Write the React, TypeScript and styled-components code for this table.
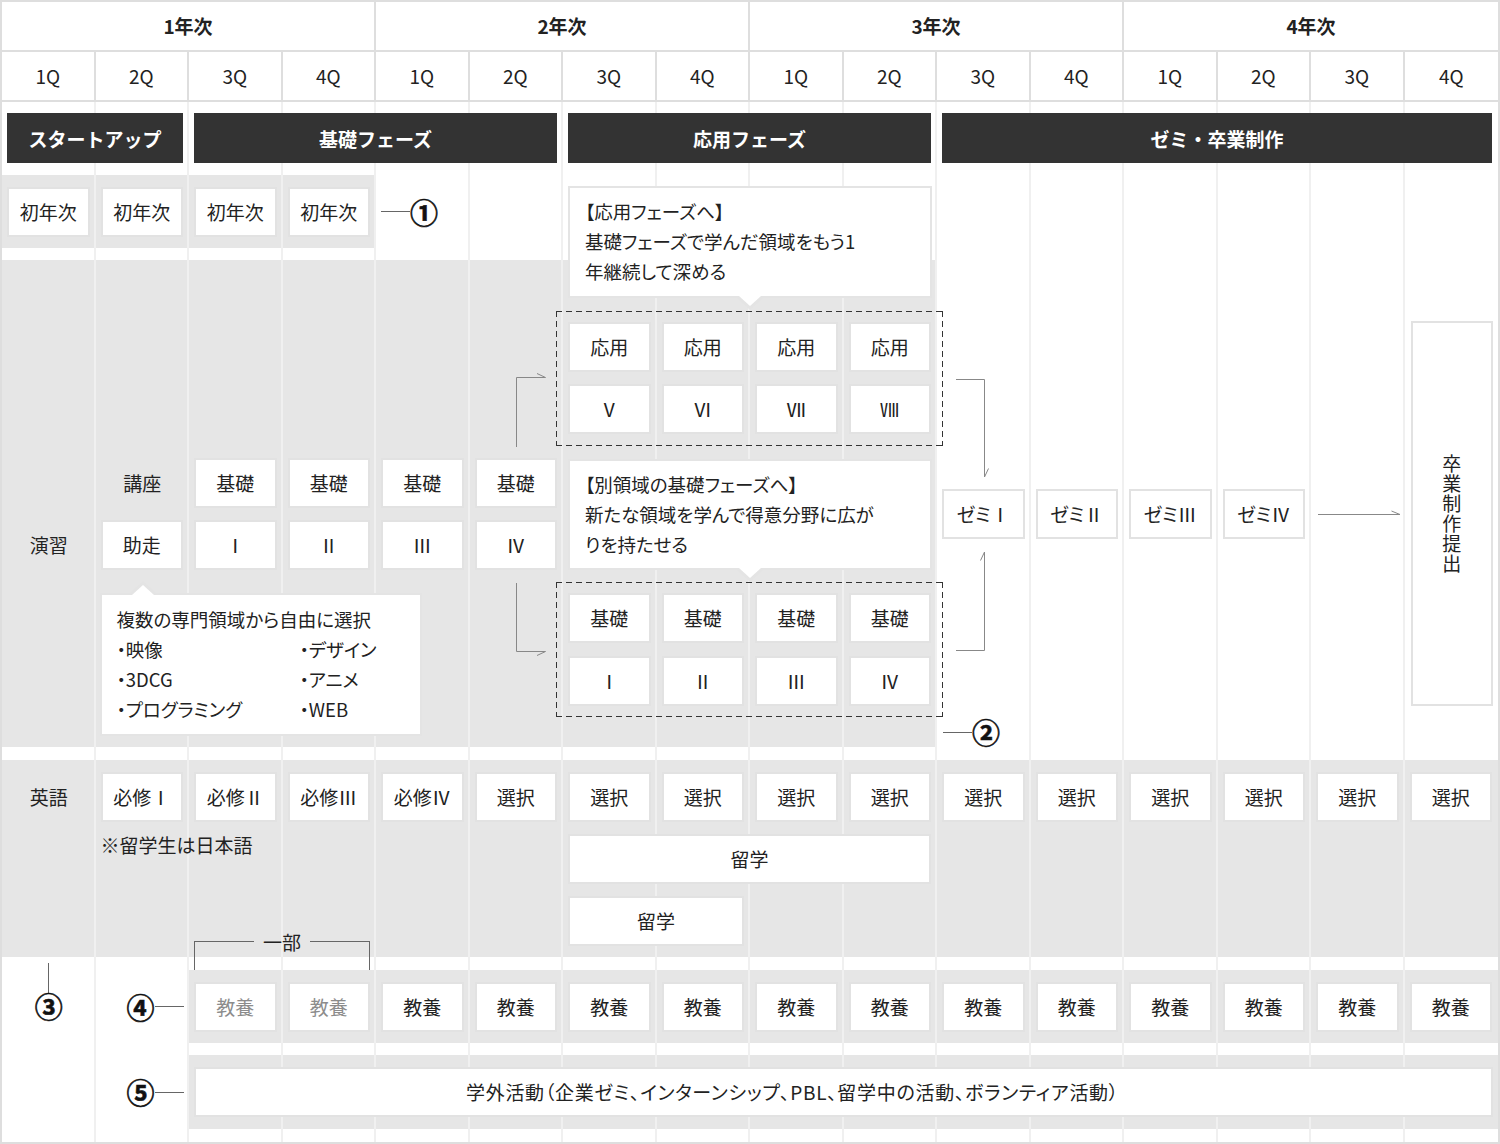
import React from 'react';
import styled, { createGlobalStyle, css } from 'styled-components';

const Global = createGlobalStyle`
  html, body { margin: 0; padding: 0; background: #fff; }
  body { font-family: "Noto Sans CJK JP", "Noto Sans", sans-serif; color: #222; }
  * { box-sizing: border-box; }
`;

type P = { $c: number; $cs?: number; $r: number; $rs?: number };
const place = css<P>`
  grid-column: ${(p) => p.$c} / span ${(p) => p.$cs ?? 1};
  grid-row: ${(p) => p.$r} / span ${(p) => p.$rs ?? 1};
`;

const Frame = styled.div`
  width: 1500px;
  height: 1144px;
  border: 2px solid #dedede;
  display: flex;
  flex-direction: column;
`;

const Header = styled.div`
  display: grid;
  grid-template-columns: repeat(16, 1fr);
  grid-template-rows: 50px 50px;
`;

const YearCell = styled.div<{ $last?: boolean }>`
  grid-column: span 4;
  display: flex;
  align-items: center;
  justify-content: center;
  padding-bottom: 2px;
  font-size: 19px;
  font-weight: 700;
  border-bottom: 2px solid #dedede;
  border-right: ${(p) => (p.$last ? 'none' : '2px solid #dedede')};
`;

const QCell = styled.div<{ $last?: boolean }>`
  display: flex;
  align-items: center;
  justify-content: center;
  padding-bottom: 2px;
  font-size: 19px;
  border-bottom: 2px solid #dedede;
  border-right: ${(p) => (p.$last ? 'none' : '2px solid #dedede')};
`;

const Body = styled.div`
  flex: 1;
  display: grid;
  grid-template-columns: repeat(16, 1fr);
  grid-template-rows: 73px 11px 62px 12px 51px 135px 136px 135px 30px 13px 197px 13px 73px 12px 74px 1fr;
`;

const Band = styled.div<P>`
  ${place};
  background: #e6e6e6;
`;

const ColLine = styled.div<{ $n: number }>`
  grid-column: ${(p) => p.$n};
  grid-row: 1 / -1;
  border-right: 2px solid #f0f0f0;
`;

const PhaseBar = styled.div<P>`
  ${place};
  align-self: start;
  margin: 11px 6px 0 5px;
  height: 50px;
  background: #333;
  color: #fff;
  font-size: 19px;
  font-weight: 700;
  display: flex;
  align-items: center;
  justify-content: center;
`;

const Box = styled.div<P & { $mt: number; $muted?: boolean }>`
  ${place};
  align-self: start;
  margin: ${(p) => p.$mt}px 6px 0 5px;
  height: 50px;
  background: #fff;
  border: 2px solid #e2e2e2;
  display: flex;
  align-items: center;
  justify-content: center;
  padding-bottom: 1px;
  font-size: 19px;
  white-space: nowrap;
  color: ${(p) => (p.$muted ? '#8c8c8c' : '#222')};
  font-feature-settings: "palt";
`;

const WideBox = styled.div<P>`
  ${place};
  align-self: start;
  margin: 12px 5px 0 5px;
  height: 50px;
  background: #fff;
  border: 2px solid #e2e2e2;
  display: flex;
  align-items: center;
  padding: 0 0 1px 270px;
  font-size: 19px;
  letter-spacing: 0.7px;
  white-space: nowrap;
  font-feature-settings: "palt";
`;

const TallBox = styled.div<P>`
  ${place};
  align-self: start;
  margin: 10px 5px 0 6px;
  height: 385px;
  background: #fff;
  border: 2px solid #e2e2e2;
  display: flex;
  align-items: center;
  justify-content: center;
`;

const VText = styled.span`
  writing-mode: vertical-rl;
  font-size: 19px;
  letter-spacing: 1px;
`;

const Label = styled.div<P & { $mt: number; $left?: boolean }>`
  ${place};
  align-self: start;
  margin: ${(p) => p.$mt}px 0 0 ${(p) => (p.$left ? 5 : 0)}px;
  height: 50px;
  display: flex;
  align-items: center;
  justify-content: ${(p) => (p.$left ? 'flex-start' : 'center')};
  padding-bottom: 1px;
  font-size: 19px;
  white-space: nowrap;
`;

const Dashed = styled.div<P>`
  ${place};
  margin: 0 -6px 0 -7px;
  background:
    repeating-linear-gradient(90deg, #333 0 6px, transparent 6px 10px) top left / 100% 1px no-repeat,
    repeating-linear-gradient(90deg, #333 0 6px, transparent 6px 10px) bottom left / 100% 1px no-repeat,
    repeating-linear-gradient(180deg, #333 0 6px, transparent 6px 10px) top left / 1px 100% no-repeat,
    repeating-linear-gradient(180deg, #333 0 6px, transparent 6px 10px) top right / 1px 100% no-repeat;
`;

const Callout = styled.div<P & { $mt: number; $h: number; $w?: number; $ml?: number; $up?: number }>`
  ${place};
  position: relative;
  align-self: start;
  justify-self: ${(p) => (p.$w ? 'start' : 'stretch')};
  width: ${(p) => (p.$w ? `${p.$w}px` : 'auto')};
  margin: ${(p) => p.$mt}px 5px 0 ${(p) => p.$ml ?? 5}px;
  height: ${(p) => p.$h}px;
  background: #fff;
  border: 2px solid #e4e4e4;
  padding: ${(p) => (p.$up ? 9 : 8)}px 15px;
  font-size: 18.5px;
  line-height: 30px;
  font-feature-settings: "palt";
  white-space: nowrap;
  &::before, &::after {
    content: '';
    position: absolute;
    width: 0;
    height: 0;
    transform: translateX(-50%);
    left: ${(p) => (p.$up ? `${p.$up}px` : '50%')};
  }
  &::before {
    border-left: 14px solid transparent;
    border-right: 14px solid transparent;
    ${(p) =>
      p.$up
        ? css`top: -14px; border-bottom: 13px solid #e4e4e4;`
        : css`bottom: -14px; border-top: 13px solid #e4e4e4;`}
  }
  &::after {
    border-left: 11px solid transparent;
    border-right: 11px solid transparent;
    ${(p) =>
      p.$up
        ? css`top: -10px; border-bottom: 10px solid #fff;`
        : css`bottom: -10px; border-top: 10px solid #fff;`}
  }
`;

const FieldList = styled.div`
  display: grid;
  grid-template-columns: 183px 1fr;
`;

const Connector = styled.div<P & { $ml: number }>`
  ${place};
  display: flex;
  align-items: center;
  padding-left: ${(p) => p.$ml}px;
`;

const Stick = styled.span`
  width: 29px;
  height: 1px;
  background: #666;
`;

const Num = styled.span`
  font-size: 28px;
  font-weight: 700;
  line-height: 26px;
  color: #111;
  -webkit-text-stroke: 0.6px #111;
`;

const StackConnector = styled.div<P>`
  ${place};
  display: flex;
  flex-direction: column;
  align-items: center;
  padding-top: 6px;
`;

const VStick = styled.span`
  width: 1px;
  height: 30px;
  background: #666;
`;

const Bracket = styled.div<P>`
  ${place};
  align-self: end;
  height: 29px;
  margin: 0 6px 0 5px;
  border-left: 1px solid #666;
  border-right: 1px solid #666;
`;

const BracketTop = styled.div`
  display: flex;
  align-items: center;
  height: 1px;
`;

const BracketLine = styled.span`
  flex: 1;
  height: 1px;
  background: #666;
`;

const BracketText = styled.span`
  padding: 0 9px;
  font-size: 19px;
  line-height: 20px;
`;

const ArrowSvg = styled.svg<P>`
  ${place};
  overflow: visible;
  display: block;
  width: 100%;
  height: 100%;
  fill: none;
  stroke: #888;
  stroke-width: 1;
`;

const Arrow = ({ c, r, rs, d }: { c: number; r: number; rs?: number; d: string }) => (
  <ArrowSvg $c={c} $r={r} $rs={rs}>
    <path d={d} />
  </ArrowSvg>
);

const quarters = ['1Q', '2Q', '3Q', '4Q'];

export default function App() {
  const lines = Array.from({ length: 15 }, (_, i) => i + 1);
  const years = ['1年次', '2年次', '3年次', '4年次'];
  return (
    <>
      <Global />
      <Frame>
        <Header>
          {years.map((y, i) => (
            <YearCell key={y} $last={i === 3}>{y}</YearCell>
          ))}
          {Array.from({ length: 16 }, (_, i) => (
            <QCell key={i} $last={i === 15}>{quarters[i % 4]}</QCell>
          ))}
        </Header>
        <Body>
          <Band $c={1} $cs={4} $r={2} $rs={2} />
          <Band $c={1} $cs={10} $r={5} $rs={5} />
          <Band $c={1} $cs={16} $r={11} />
          <Band $c={3} $cs={14} $r={13} />
          <Band $c={3} $cs={14} $r={15} />

          {lines.map((n) => (
            <ColLine key={n} $n={n} />
          ))}

          <PhaseBar $c={1} $cs={2} $r={1}>スタートアップ</PhaseBar>
          <PhaseBar $c={3} $cs={4} $r={1}>基礎フェーズ</PhaseBar>
          <PhaseBar $c={7} $cs={4} $r={1}>応用フェーズ</PhaseBar>
          <PhaseBar $c={11} $cs={6} $r={1}>ゼミ・卒業制作</PhaseBar>

          {[1, 2, 3, 4].map((c) => (
            <Box key={c} $c={c} $r={3} $mt={1}>初年次</Box>
          ))}
          <Connector $c={5} $r={3} $ml={5} style={{ alignSelf: 'start', height: 51 }}>
            <Stick />
            <Num>①</Num>
          </Connector>

          <Callout $c={7} $cs={4} $r={3} $rs={3} $mt={0} $h={112}>
            【応用フェーズへ】<br />
            基礎フェーズで学んだ領域をもう1<br />
            年継続して深める
          </Callout>

          <Dashed $c={7} $cs={4} $r={6} />
          {['応用', '応用', '応用', '応用'].map((t, i) => (
            <Box key={`a${i}`} $c={7 + i} $r={6} $mt={11}>{t}</Box>
          ))}
          {['Ⅴ', 'Ⅵ', 'Ⅶ', 'Ⅷ'].map((t, i) => (
            <Box key={`b${i}`} $c={7 + i} $r={6} $mt={73}>{t}</Box>
          ))}

          <Label $c={1} $r={7} $mt={74}>演習</Label>
          <Label $c={2} $r={7} $mt={12}>講座</Label>
          <Box $c={2} $r={7} $mt={74}>助走</Box>
          {[3, 4, 5, 6].map((c) => (
            <Box key={`k${c}`} $c={c} $r={7} $mt={12}>基礎</Box>
          ))}
          {['Ⅰ', 'Ⅱ', 'Ⅲ', 'Ⅳ'].map((t, i) => (
            <Box key={`n${i}`} $c={3 + i} $r={7} $mt={74}>{t}</Box>
          ))}

          <Callout $c={7} $cs={4} $r={7} $mt={13} $h={111}>
            【別領域の基礎フェーズへ】<br />
            新たな領域を学んで得意分野に広が<br />
            りを持たせる
          </Callout>

          <Dashed $c={7} $cs={4} $r={8} />
          {[7, 8, 9, 10].map((c) => (
            <Box key={`l${c}`} $c={c} $r={8} $mt={11}>基礎</Box>
          ))}
          {['Ⅰ', 'Ⅱ', 'Ⅲ', 'Ⅳ'].map((t, i) => (
            <Box key={`m${i}`} $c={7 + i} $r={8} $mt={74}>{t}</Box>
          ))}

          <Callout $c={2} $cs={4} $r={8} $rs={2} $mt={11} $h={143} $w={322} $ml={4} $up={41}>
            複数の専門領域から自由に選択
            <FieldList>
              <span>・映像</span>
              <span>・デザイン</span>
              <span>・3DCG</span>
              <span>・アニメ</span>
              <span>・プログラミング</span>
              <span>・WEB</span>
            </FieldList>
          </Callout>

          {['ゼミⅠ', 'ゼミⅡ', 'ゼミⅢ', 'ゼミⅣ'].map((t, i) => (
            <Box key={t} $c={11 + i} $r={7} $mt={43}>{t}</Box>
          ))}
          <TallBox $c={16} $r={6} $rs={3}>
            <VText>卒業制作提出</VText>
          </TallBox>

          <Arrow c={6} r={6} rs={2} d="M46.5 136 V66.5 H75.5 M75.5 66.5 L67 62.5" />
          <Arrow c={6} r={8} d="M46.5 1 V69.5 H75.5 M75.5 69.5 L67 73.5" />
          <Arrow c={11} r={6} rs={2} d="M19 68.5 H47.5 V166 M47.5 166 L51.5 157.5" />
          <Arrow c={11} r={7} rs={2} d="M19 204.5 H47.5 V106 M47.5 106 L43.5 114.5" />
          <Arrow c={15} r={7} d="M7 68.5 H89 M89 68.5 L80.5 65" />

          <Connector $c={11} $r={9} $ml={6}>
            <Stick />
            <Num>②</Num>
          </Connector>

          <Label $c={1} $r={11} $mt={12}>英語</Label>
          {['必修Ⅰ', '必修Ⅱ', '必修Ⅲ', '必修Ⅳ'].map((t, i) => (
            <Box key={t} $c={2 + i} $r={11} $mt={12}>{t}</Box>
          ))}
          {Array.from({ length: 11 }, (_, i) => (
            <Box key={`s${i}`} $c={6 + i} $r={11} $mt={12}>選択</Box>
          ))}
          <Label $c={2} $cs={3} $r={11} $mt={60} $left>※留学生は日本語</Label>
          <Box $c={7} $cs={4} $r={11} $mt={74}>留学</Box>
          <Box $c={7} $cs={2} $r={11} $mt={136}>留学</Box>

          <Bracket $c={3} $cs={2} $r={11} $rs={2}>
            <BracketTop>
              <BracketLine />
              <BracketText>一部</BracketText>
              <BracketLine />
            </BracketTop>
          </Bracket>

          <StackConnector $c={1} $r={12} $rs={4}>
            <VStick />
            <Num>③</Num>
          </StackConnector>

          <Connector $c={2} $r={13} $ml={31}>
            <Num>④</Num>
            <Stick />
          </Connector>
          {Array.from({ length: 14 }, (_, i) => (
            <Box key={`e${i}`} $c={3 + i} $r={13} $mt={12} $muted={i < 2}>教養</Box>
          ))}

          <Connector $c={2} $r={15} $ml={31}>
            <Num>⑤</Num>
            <Stick />
          </Connector>
          <WideBox $c={3} $cs={14} $r={15}>
            学外活動（企業ゼミ、インターンシップ、PBL、留学中の活動、ボランティア活動）
          </WideBox>
        </Body>
      </Frame>
    </>
  );
}
